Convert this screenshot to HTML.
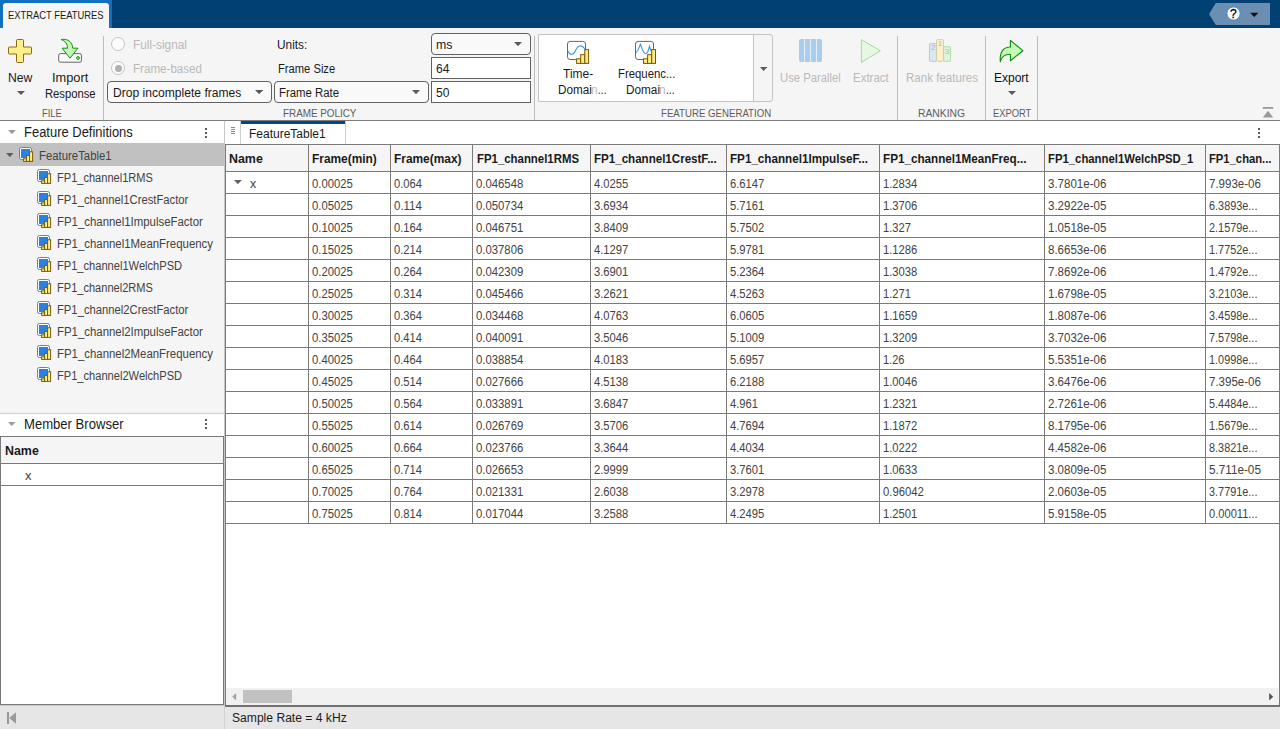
<!DOCTYPE html>
<html lang="en"><head><meta charset="utf-8"><title>Extract Features</title>
<style>
html,body{margin:0;padding:0;}
body{width:1280px;height:729px;overflow:hidden;position:relative;background:#fff;font-family:"Liberation Sans", sans-serif;}
.a{position:absolute;box-sizing:border-box;}
.t{position:absolute;white-space:pre;line-height:20px;height:20px;transform-origin:0 50%;}
</style></head><body>
<div class="a" style="left:0px;top:0px;width:1280px;height:28px;background:#004073;"></div>
<div class="a" style="left:0px;top:0px;width:112px;height:28px;background:#1171C0;"></div>
<div class="a" style="left:3px;top:3px;width:106px;height:25px;background:#F5F5F5;border-radius:3px 3px 0 0;"></div>
<span class="t" style="left:8.0px;top:5.0px;font-size:11px;font-weight:400;color:#1a1a1a;transform:scaleX(0.8522);">EXTRACT FEATURES</span>
<svg class="a" style="left:1209px;top:3px" width="61" height="22" viewBox="0 0 61 22"><path d="M0 11L6.8 0H61V22H6.8Z" fill="#6A8FB2"/><circle cx="24.5" cy="10.5" r="6.6" fill="#fff" stroke="#2B8CF0" stroke-width="0.9"/><path d="M41 9.8H49.4L45.2 14Z" fill="#111"/></svg>
<span class="t" style="left:1230.1px;top:4.3px;font-size:13px;font-weight:400;color:#000;transform:scaleX(0.9261);-webkit-text-stroke:0.3px #000;">?</span>
<div class="a" style="left:0px;top:28px;width:1280px;height:92px;background:#F5F5F5;"></div>
<div class="a" style="left:0px;top:120px;width:1280px;height:1px;background:#7d7d7d;"></div>
<div class="a" style="left:103px;top:36px;width:1px;height:84px;background:#bcbcbc;"></div>
<div class="a" style="left:534px;top:36px;width:1px;height:84px;background:#bcbcbc;"></div>
<div class="a" style="left:897px;top:36px;width:1px;height:84px;background:#bcbcbc;"></div>
<div class="a" style="left:985px;top:36px;width:1px;height:84px;background:#bcbcbc;"></div>
<div class="a" style="left:1037px;top:36px;width:1px;height:84px;background:#bcbcbc;"></div>
<svg class="a" style="left:8px;top:39px" width="24" height="24" viewBox="0 0 24 24"><path d="M9.5 0.5H14.5Q15.5 0.5 15.5 1.5V8H22.5Q23.5 8 23.5 9V14Q23.5 15 22.5 15H15.5V22.5Q15.5 23.5 14.5 23.5H9.5Q8.5 23.5 8.5 22.5V15H1.5Q0.5 15 0.5 14V9Q0.5 8 1.5 8H8.5V1.5Q8.5 0.5 9.5 0.5Z" fill="#FFEF8C" stroke="#8A6A0A" stroke-width="1"/></svg>
<span class="t" style="left:8.1px;top:68.0px;font-size:12px;font-weight:400;color:#1a1a1a;transform:scaleX(1.0160);">New</span>
<svg class="a" style="left:17px;top:91.3px" width="8" height="4.0" viewBox="0 0 8 4.0"><path d="M0 0H8L4.0 4.0Z" fill="#5a5a5a"/></svg>
<svg class="a" style="left:57px;top:38px" width="27" height="27" viewBox="0 0 27 27"><rect x="1.7" y="15.6" width="22.7" height="8.6" rx="1.6" fill="#fbfbfb" stroke="#666" stroke-width="1"/><path d="M4 1.5C10 0.6 15.2 3 15.8 10.2H20.9L13 20.2L5.1 10.2H10.5C10.5 6 8.5 3 4 1.5Z" fill="#C6F9B8" stroke="#12900F" stroke-width="1" stroke-linejoin="round"/><circle cx="21" cy="20" r="1.4" fill="#A6EE96" stroke="#12900F" stroke-width="1"/></svg>
<span class="t" style="left:52.2px;top:68.0px;font-size:12px;font-weight:400;color:#1a1a1a;transform:scaleX(1.0672);">Import</span>
<span class="t" style="left:45.0px;top:84.0px;font-size:12px;font-weight:400;color:#1a1a1a;transform:scaleX(0.9362);">Response</span>
<span class="t" style="left:42.0px;top:103.0px;font-size:11px;font-weight:400;color:#5c5c5c;transform:scaleX(0.8522);">FILE</span>
<div class="a" style="left:111px;top:37px;width:14px;height:14px;background:#fbfbfb;border:1px solid #c6c6c6;border-radius:50%;"></div>
<div class="a" style="left:111px;top:61px;width:14px;height:14px;background:#fbfbfb;border:1px solid #c6c6c6;border-radius:50%;"></div>
<div class="a" style="left:114.5px;top:64.5px;width:7px;height:7px;background:#b0b0b0;border-radius:50%;"></div>
<span class="t" style="left:132.5px;top:35.0px;font-size:12px;font-weight:400;color:#b9b9b9;transform:scaleX(0.9874);">Full-signal</span>
<span class="t" style="left:132.5px;top:59.0px;font-size:12px;font-weight:400;color:#b9b9b9;transform:scaleX(0.9667);">Frame-based</span>
<div class="a" style="left:107px;top:81px;width:165px;height:22px;background:#f9f9f9;border:1px solid #616161;border-radius:4px;"></div>
<span class="t" style="left:112.5px;top:82.7px;font-size:12px;font-weight:400;color:#1a1a1a;transform:scaleX(1.0079);">Drop incomplete frames</span>
<svg class="a" style="left:254.7px;top:90px" width="8.300000000000011" height="4.200000000000003" viewBox="0 0 8.300000000000011 4.200000000000003"><path d="M0 0H8.300000000000011L4.150000000000006 4.200000000000003Z" fill="#5a5a5a"/></svg>
<div class="a" style="left:274px;top:81px;width:155px;height:22px;background:#f9f9f9;border:1px solid #616161;border-radius:4px;"></div>
<span class="t" style="left:279.3px;top:82.7px;font-size:12px;font-weight:400;color:#1a1a1a;transform:scaleX(0.9470);">Frame Rate</span>
<svg class="a" style="left:412px;top:90px" width="8" height="4.200000000000003" viewBox="0 0 8 4.200000000000003"><path d="M0 0H8L4.0 4.200000000000003Z" fill="#5a5a5a"/></svg>
<span class="t" style="left:277.4px;top:35.0px;font-size:12px;font-weight:400;color:#1a1a1a;transform:scaleX(0.9874);">Units:</span>
<span class="t" style="left:277.5px;top:59.0px;font-size:12px;font-weight:400;color:#1a1a1a;transform:scaleX(0.9322);">Frame Size</span>
<div class="a" style="left:431px;top:33px;width:100px;height:22px;background:#f9f9f9;border:1px solid #616161;border-radius:4px;"></div>
<span class="t" style="left:436.1px;top:35.0px;font-size:12px;font-weight:400;color:#1a1a1a;transform:scaleX(1.0250);">ms</span>
<svg class="a" style="left:514.2px;top:42.2px" width="8.0" height="4.199999999999996" viewBox="0 0 8.0 4.199999999999996"><path d="M0 0H8.0L4.0 4.199999999999996Z" fill="#5a5a5a"/></svg>
<div class="a" style="left:431px;top:57px;width:100px;height:22px;background:#fff;border:1px solid #616161;"></div>
<span class="t" style="left:436.1px;top:59.0px;font-size:12px;font-weight:400;color:#1a1a1a;transform:scaleX(1.0030);">64</span>
<div class="a" style="left:431px;top:81px;width:100px;height:22px;background:#fff;border:1px solid #616161;"></div>
<span class="t" style="left:436.1px;top:82.7px;font-size:12px;font-weight:400;color:#1a1a1a;transform:scaleX(1.0030);">50</span>
<span class="t" style="left:282.8px;top:103.0px;font-size:11px;font-weight:400;color:#5c5c5c;transform:scaleX(0.8961);">FRAME POLICY</span>
<div class="a" style="left:538px;top:34px;width:235px;height:68px;background:#f5f5f5;border:1px solid #c4c4c4;border-radius:0 3px 3px 0;"></div>
<div class="a" style="left:539px;top:35px;width:214px;height:66px;background:#fff;"></div>
<div class="a" style="left:753px;top:35px;width:1px;height:66px;background:#c4c4c4;"></div>
<svg class="a" style="left:759.5px;top:67px" width="7.2000000000000455" height="4" viewBox="0 0 7.2000000000000455 4"><path d="M0 0H7.2000000000000455L3.6000000000000227 4Z" fill="#5a5a5a"/></svg>
<svg class="a" style="left:566px;top:40px" width="24" height="25" viewBox="0 0 24 25"><rect x="1.5" y="1.4" width="18" height="18.1" rx="2.6" fill="#fff" stroke="#666" stroke-width="1"/><path d="M1.8 11C4 16 7.5 15 9.5 10.5S15 3.5 19 9" fill="none" stroke="#3C96DC" stroke-width="1.1"/><g stroke="#7A5500" stroke-width="1" fill="#FFEE88"><rect x="10.6" y="18.8" width="4.1" height="4.6"/><rect x="14.7" y="14.7" width="4.1" height="8.7"/><rect x="18.799999999999997" y="9.6" width="3.8" height="13.8"/></g></svg>
<svg class="a" style="left:634px;top:40px" width="24" height="25" viewBox="0 0 24 25"><rect x="1.5" y="1.4" width="18" height="18.1" rx="2.6" fill="#fff" stroke="#666" stroke-width="1"/><path d="M1.8 12.7C4 11.5 5.5 6 6.5 4.3C7.5 7 9 13.5 11.5 13.7S14.5 9 15.5 6.3L17 11" fill="none" stroke="#3C96DC" stroke-width="1.1"/><g stroke="#7A5500" stroke-width="1" fill="#FFEE88"><rect x="9.5" y="18.8" width="4.1" height="4.6"/><rect x="13.6" y="14.7" width="4.1" height="8.7"/><rect x="17.7" y="9.6" width="3.8" height="13.8"/></g></svg>
<span class="t" style="left:563.0px;top:64.0px;font-size:12px;font-weight:400;color:#1a1a1a;transform:scaleX(0.9994);">Time-</span>
<span class="t" style="left:558.0px;top:79.5px;font-size:12px;font-weight:400;color:#1a1a1a;transform:scaleX(0.9744);">Domai</span>
<span class="t" style="left:591.3px;top:79.5px;font-size:12px;font-weight:400;color:#bdbdbd;transform:scaleX(1.0019);">n</span>
<span class="t" style="left:598.0px;top:79.5px;font-size:12px;font-weight:400;color:#1a1a1a;transform:scaleX(0.8487);">...</span>
<span class="t" style="left:617.5px;top:64.0px;font-size:12px;font-weight:400;color:#1a1a1a;transform:scaleX(0.9456);">Frequenc...</span>
<span class="t" style="left:625.8px;top:79.5px;font-size:12px;font-weight:400;color:#1a1a1a;transform:scaleX(0.9802);">Domai</span>
<span class="t" style="left:659.3px;top:79.5px;font-size:12px;font-weight:400;color:#bdbdbd;transform:scaleX(1.0019);">n</span>
<span class="t" style="left:666.3px;top:79.5px;font-size:12px;font-weight:400;color:#1a1a1a;transform:scaleX(0.8587);">...</span>
<span class="t" style="left:660.5px;top:103.0px;font-size:11px;font-weight:400;color:#5c5c5c;transform:scaleX(0.8781);">FEATURE GENERATION</span>
<svg class="a" style="left:799px;top:38.8px" width="23" height="23.2" viewBox="0 0 23 23.2"><path d="M2.5 0H5V23.2H2.5Q0 23.2 0 20.7V2.5Q0 0 2.5 0Z" fill="#AACDEE"/><rect x="6" y="0" width="5" height="23.2" fill="#AACDEE"/><rect x="12" y="0" width="5" height="23.2" fill="#AACDEE"/><path d="M18 0H20.5Q23 0 23 2.5V20.7Q23 23.2 20.5 23.2H18Z" fill="#AACDEE"/><path d="M5.5 0V23.2M11.5 0V23.2M17.5 0V23.2" stroke="#E3EEF8" stroke-width="1"/></svg>
<span class="t" style="left:780.3px;top:68.0px;font-size:12px;font-weight:400;color:#b9b9b9;transform:scaleX(0.9397);">Use Parallel</span>
<svg class="a" style="left:860px;top:38px" width="22" height="26" viewBox="0 0 22 26"><path d="M1.4 1.6L20.3 12.8L1.4 24.4Z" fill="#E6F7E2" stroke="#A6D9A2" stroke-width="1" stroke-linejoin="round"/></svg>
<span class="t" style="left:853.1px;top:68.0px;font-size:12px;font-weight:400;color:#b9b9b9;transform:scaleX(0.9587);">Extract</span>
<svg class="a" style="left:928px;top:38px" width="24" height="25" viewBox="0 0 24 25"><rect x="1.6" y="5.6" width="6.8" height="17.7" rx="0.8" fill="#DDE8F5" stroke="#A9C6EC"/><rect x="15.6" y="8.7" width="6.8" height="14.6" rx="0.8" fill="#E0F5DC" stroke="#A9DBA3"/><rect x="8.6" y="1.7" width="6.8" height="21.6" rx="0.8" fill="#FBF2CC" stroke="#D9C9A0"/><text x="3" y="12" font-size="8" font-family="Liberation Sans, sans-serif" fill="#b4b4b4">2</text><text x="9.8" y="7.9" font-size="8" font-family="Liberation Sans, sans-serif" fill="#b4b4b4">1</text><text x="16.8" y="15.6" font-size="8" font-family="Liberation Sans, sans-serif" fill="#b4b4b4">3</text></svg>
<span class="t" style="left:905.7px;top:68.0px;font-size:12px;font-weight:400;color:#b9b9b9;transform:scaleX(0.9636);">Rank features</span>
<span class="t" style="left:918.0px;top:103.0px;font-size:11px;font-weight:400;color:#5c5c5c;transform:scaleX(0.9377);">RANKING</span>
<svg class="a" style="left:999px;top:39px" width="25" height="25" viewBox="0 0 25 25"><path d="M11.4 1.4L23.9 11.7L11.4 21.7V15.2C6 15 2.5 17.5 1.3 22.8C0.5 12 5 8 11.4 8Z" fill="#C4FAB6" stroke="#0E8C0E" stroke-width="1.1" stroke-linejoin="round"/></svg>
<span class="t" style="left:994.3px;top:68.0px;font-size:12px;font-weight:400;color:#111;transform:scaleX(1.0004);">Export</span>
<svg class="a" style="left:1008px;top:91.4px" width="8" height="4.0" viewBox="0 0 8 4.0"><path d="M0 0H8L4.0 4.0Z" fill="#5a5a5a"/></svg>
<span class="t" style="left:992.9px;top:103.0px;font-size:11px;font-weight:400;color:#5c5c5c;transform:scaleX(0.8483);">EXPORT</span>
<svg class="a" style="left:1262px;top:107px" width="12" height="11" viewBox="0 0 12 11"><rect x="0.8" y="0" width="10.4" height="1.8" fill="#9a9a9a"/><path d="M0.8 10.4H11.2L6 3.8Z" fill="#9a9a9a"/></svg>
<div class="a" style="left:0px;top:121px;width:224px;height:22px;background:#fff;"></div>
<svg class="a" style="left:8.2px;top:130px" width="7.800000000000001" height="4.199999999999989" viewBox="0 0 7.800000000000001 4.199999999999989"><path d="M0 0H7.800000000000001L3.9000000000000004 4.199999999999989Z" fill="#9a9a9a"/></svg>
<span class="t" style="left:24.1px;top:121.6px;font-size:14px;font-weight:400;color:#1a1a1a;transform:scaleX(0.9258);">Feature Definitions</span>
<svg class="a" style="left:205px;top:127.6px" width="2" height="10" viewBox="0 0 2 10"><rect x="0" y="0" width="2" height="2" fill="#5a5a5a"/><rect x="0" y="4" width="2" height="2" fill="#5a5a5a"/><rect x="0" y="8" width="2" height="2" fill="#5a5a5a"/></svg>
<div class="a" style="left:0px;top:143px;width:224px;height:270px;background:#F5F5F5;"></div>
<div class="a" style="left:0px;top:143px;width:224px;height:23px;background:#C1C1C1;"></div>
<div class="a" style="left:0px;top:413px;width:224px;height:1px;background:#cfcfcf;"></div>
<div class="a" style="left:224px;top:121px;width:1px;height:585px;background:#c6c6c6;"></div>
<svg class="a" style="left:5.6px;top:153px" width="7.6" height="4.199999999999989" viewBox="0 0 7.6 4.199999999999989"><path d="M0 0H7.6L3.8 4.199999999999989Z" fill="#5f5f5f"/></svg>
<svg class="a" style="left:19px;top:147px" width="15" height="16" viewBox="0 0 15 16"><rect x="0.5" y="0.5" width="12" height="12" rx="1.8" fill="#fff" stroke="#3B8DE8" stroke-width="1"/><rect x="2" y="2" width="9" height="9" fill="#2A82DC"/><g stroke="#7A5A06" stroke-width="1" fill="#FFF08C"><rect x="4.6" y="11.8" width="3" height="2.6"/><rect x="7.6" y="8.6" width="3" height="5.8"/><rect x="10.6" y="4.8" width="3" height="9.6"/></g></svg>
<span class="t" style="left:39.0px;top:146.0px;font-size:12px;font-weight:400;color:#424242;transform:scaleX(0.9463);">FeatureTable1</span>
<svg class="a" style="left:37px;top:169px" width="15" height="16" viewBox="0 0 15 16"><rect x="0.5" y="0.5" width="12" height="12" rx="1.8" fill="#fff" stroke="#3B8DE8" stroke-width="1"/><rect x="2" y="2" width="9" height="9" fill="#2A82DC"/><g stroke="#7A5A06" stroke-width="1" fill="#FFF08C"><rect x="4.6" y="11.8" width="3" height="2.6"/><rect x="7.6" y="8.6" width="3" height="5.8"/><rect x="10.6" y="4.8" width="3" height="9.6"/></g></svg>
<span class="t" style="left:57.3px;top:167.8px;font-size:12px;font-weight:400;color:#424242;transform:scaleX(0.9216);">FP1_channel1RMS</span>
<svg class="a" style="left:37px;top:191px" width="15" height="16" viewBox="0 0 15 16"><rect x="0.5" y="0.5" width="12" height="12" rx="1.8" fill="#fff" stroke="#3B8DE8" stroke-width="1"/><rect x="2" y="2" width="9" height="9" fill="#2A82DC"/><g stroke="#7A5A06" stroke-width="1" fill="#FFF08C"><rect x="4.6" y="11.8" width="3" height="2.6"/><rect x="7.6" y="8.6" width="3" height="5.8"/><rect x="10.6" y="4.8" width="3" height="9.6"/></g></svg>
<span class="t" style="left:57.3px;top:189.8px;font-size:12px;font-weight:400;color:#424242;transform:scaleX(0.9373);">FP1_channel1CrestFactor</span>
<svg class="a" style="left:37px;top:213px" width="15" height="16" viewBox="0 0 15 16"><rect x="0.5" y="0.5" width="12" height="12" rx="1.8" fill="#fff" stroke="#3B8DE8" stroke-width="1"/><rect x="2" y="2" width="9" height="9" fill="#2A82DC"/><g stroke="#7A5A06" stroke-width="1" fill="#FFF08C"><rect x="4.6" y="11.8" width="3" height="2.6"/><rect x="7.6" y="8.6" width="3" height="5.8"/><rect x="10.6" y="4.8" width="3" height="9.6"/></g></svg>
<span class="t" style="left:57.3px;top:211.8px;font-size:12px;font-weight:400;color:#424242;transform:scaleX(0.9510);">FP1_channel1ImpulseFactor</span>
<svg class="a" style="left:37px;top:235px" width="15" height="16" viewBox="0 0 15 16"><rect x="0.5" y="0.5" width="12" height="12" rx="1.8" fill="#fff" stroke="#3B8DE8" stroke-width="1"/><rect x="2" y="2" width="9" height="9" fill="#2A82DC"/><g stroke="#7A5A06" stroke-width="1" fill="#FFF08C"><rect x="4.6" y="11.8" width="3" height="2.6"/><rect x="7.6" y="8.6" width="3" height="5.8"/><rect x="10.6" y="4.8" width="3" height="9.6"/></g></svg>
<span class="t" style="left:57.3px;top:233.8px;font-size:12px;font-weight:400;color:#424242;transform:scaleX(0.9506);">FP1_channel1MeanFrequency</span>
<svg class="a" style="left:37px;top:257px" width="15" height="16" viewBox="0 0 15 16"><rect x="0.5" y="0.5" width="12" height="12" rx="1.8" fill="#fff" stroke="#3B8DE8" stroke-width="1"/><rect x="2" y="2" width="9" height="9" fill="#2A82DC"/><g stroke="#7A5A06" stroke-width="1" fill="#FFF08C"><rect x="4.6" y="11.8" width="3" height="2.6"/><rect x="7.6" y="8.6" width="3" height="5.8"/><rect x="10.6" y="4.8" width="3" height="9.6"/></g></svg>
<span class="t" style="left:57.3px;top:255.8px;font-size:12px;font-weight:400;color:#424242;transform:scaleX(0.9254);">FP1_channel1WelchPSD</span>
<svg class="a" style="left:37px;top:279px" width="15" height="16" viewBox="0 0 15 16"><rect x="0.5" y="0.5" width="12" height="12" rx="1.8" fill="#fff" stroke="#3B8DE8" stroke-width="1"/><rect x="2" y="2" width="9" height="9" fill="#2A82DC"/><g stroke="#7A5A06" stroke-width="1" fill="#FFF08C"><rect x="4.6" y="11.8" width="3" height="2.6"/><rect x="7.6" y="8.6" width="3" height="5.8"/><rect x="10.6" y="4.8" width="3" height="9.6"/></g></svg>
<span class="t" style="left:57.3px;top:277.8px;font-size:12px;font-weight:400;color:#424242;transform:scaleX(0.9216);">FP1_channel2RMS</span>
<svg class="a" style="left:37px;top:301px" width="15" height="16" viewBox="0 0 15 16"><rect x="0.5" y="0.5" width="12" height="12" rx="1.8" fill="#fff" stroke="#3B8DE8" stroke-width="1"/><rect x="2" y="2" width="9" height="9" fill="#2A82DC"/><g stroke="#7A5A06" stroke-width="1" fill="#FFF08C"><rect x="4.6" y="11.8" width="3" height="2.6"/><rect x="7.6" y="8.6" width="3" height="5.8"/><rect x="10.6" y="4.8" width="3" height="9.6"/></g></svg>
<span class="t" style="left:57.3px;top:299.8px;font-size:12px;font-weight:400;color:#424242;transform:scaleX(0.9373);">FP1_channel2CrestFactor</span>
<svg class="a" style="left:37px;top:323px" width="15" height="16" viewBox="0 0 15 16"><rect x="0.5" y="0.5" width="12" height="12" rx="1.8" fill="#fff" stroke="#3B8DE8" stroke-width="1"/><rect x="2" y="2" width="9" height="9" fill="#2A82DC"/><g stroke="#7A5A06" stroke-width="1" fill="#FFF08C"><rect x="4.6" y="11.8" width="3" height="2.6"/><rect x="7.6" y="8.6" width="3" height="5.8"/><rect x="10.6" y="4.8" width="3" height="9.6"/></g></svg>
<span class="t" style="left:57.3px;top:321.8px;font-size:12px;font-weight:400;color:#424242;transform:scaleX(0.9510);">FP1_channel2ImpulseFactor</span>
<svg class="a" style="left:37px;top:345px" width="15" height="16" viewBox="0 0 15 16"><rect x="0.5" y="0.5" width="12" height="12" rx="1.8" fill="#fff" stroke="#3B8DE8" stroke-width="1"/><rect x="2" y="2" width="9" height="9" fill="#2A82DC"/><g stroke="#7A5A06" stroke-width="1" fill="#FFF08C"><rect x="4.6" y="11.8" width="3" height="2.6"/><rect x="7.6" y="8.6" width="3" height="5.8"/><rect x="10.6" y="4.8" width="3" height="9.6"/></g></svg>
<span class="t" style="left:57.3px;top:343.8px;font-size:12px;font-weight:400;color:#424242;transform:scaleX(0.9506);">FP1_channel2MeanFrequency</span>
<svg class="a" style="left:37px;top:367px" width="15" height="16" viewBox="0 0 15 16"><rect x="0.5" y="0.5" width="12" height="12" rx="1.8" fill="#fff" stroke="#3B8DE8" stroke-width="1"/><rect x="2" y="2" width="9" height="9" fill="#2A82DC"/><g stroke="#7A5A06" stroke-width="1" fill="#FFF08C"><rect x="4.6" y="11.8" width="3" height="2.6"/><rect x="7.6" y="8.6" width="3" height="5.8"/><rect x="10.6" y="4.8" width="3" height="9.6"/></g></svg>
<span class="t" style="left:57.3px;top:365.8px;font-size:12px;font-weight:400;color:#424242;transform:scaleX(0.9254);">FP1_channel2WelchPSD</span>
<div class="a" style="left:0px;top:414px;width:224px;height:22px;background:#fff;"></div>
<svg class="a" style="left:8.3px;top:422.2px" width="7.399999999999999" height="4.0" viewBox="0 0 7.399999999999999 4.0"><path d="M0 0H7.399999999999999L3.6999999999999993 4.0Z" fill="#9a9a9a"/></svg>
<span class="t" style="left:23.9px;top:414.0px;font-size:14px;font-weight:400;color:#1a1a1a;transform:scaleX(0.9344);">Member Browser</span>
<svg class="a" style="left:205px;top:419.4px" width="2" height="10" viewBox="0 0 2 10"><rect x="0" y="0" width="2" height="2" fill="#5a5a5a"/><rect x="0" y="4" width="2" height="2" fill="#5a5a5a"/><rect x="0" y="8" width="2" height="2" fill="#5a5a5a"/></svg>
<div class="a" style="left:0px;top:436px;width:224px;height:269px;background:#fff;border:1px solid #7a7a7a;"></div>
<div class="a" style="left:1px;top:437px;width:222px;height:26px;background:#F5F5F5;"></div>
<div class="a" style="left:0px;top:463px;width:224px;height:1px;background:#7a7a7a;"></div>
<div class="a" style="left:0px;top:485px;width:224px;height:1px;background:#7a7a7a;"></div>
<span class="t" style="left:4.5px;top:440.7px;font-size:12px;font-weight:700;color:#1a1a1a;transform:scaleX(1.0340);">Name</span>
<span class="t" style="left:24.5px;top:466.2px;font-size:12px;font-weight:400;color:#424242;transform:scaleX(1.0833);">x</span>
<div class="a" style="left:0px;top:705px;width:1280px;height:1px;background:#c9c9c9;"></div>
<div class="a" style="left:0px;top:706px;width:1280px;height:23px;background:#E6E6E6;"></div>
<div class="a" style="left:224px;top:706px;width:1px;height:23px;background:#d2d2d2;"></div>
<svg class="a" style="left:7px;top:712px" width="10" height="12" viewBox="0 0 10 12"><rect x="0" y="0" width="2" height="12" fill="#999"/><path d="M9 0.3V11.7L2.2 6Z" fill="#999"/></svg>
<span class="t" style="left:231.8px;top:707.5px;font-size:12px;font-weight:400;color:#1a1a1a;transform:scaleX(1.0086);">Sample Rate = 4 kHz</span>
<div class="a" style="left:225px;top:121px;width:1055px;height:23px;background:#fff;"></div>
<div class="a" style="left:231px;top:127px;width:4px;height:1px;background:#8a8a8a;"></div>
<div class="a" style="left:231px;top:129px;width:4px;height:1px;background:#8a8a8a;"></div>
<div class="a" style="left:231px;top:131px;width:4px;height:1px;background:#8a8a8a;"></div>
<div class="a" style="left:231px;top:133px;width:4px;height:1px;background:#8a8a8a;"></div>
<div class="a" style="left:241px;top:121px;width:104px;height:3px;background:#00498A;"></div>
<div class="a" style="left:345px;top:121px;width:1px;height:23px;background:#cdcdcd;"></div>
<div class="a" style="left:240px;top:121px;width:1px;height:23px;background:#cdcdcd;"></div>
<span class="t" style="left:248.7px;top:124.0px;font-size:12px;font-weight:400;color:#1a1a1a;transform:scaleX(0.9998);">FeatureTable1</span>
<svg class="a" style="left:1258px;top:127.5px" width="2" height="10" viewBox="0 0 2 10"><rect x="0" y="0" width="2" height="2" fill="#5a5a5a"/><rect x="0" y="4" width="2" height="2" fill="#5a5a5a"/><rect x="0" y="8" width="2" height="2" fill="#5a5a5a"/></svg>
<div class="a" style="left:225px;top:144px;width:1055px;height:562px;background:#fff;border:1px solid #7a7a7a;border-left-width:1.5px;"></div>
<div class="a" style="left:226px;top:145px;width:1053px;height:26px;background:#F5F5F5;"></div>
<div class="a" style="left:226px;top:171px;width:1054px;height:1px;background:#7a7a7a;"></div>
<div class="a" style="left:226px;top:193px;width:1054px;height:1px;background:#7a7a7a;"></div>
<div class="a" style="left:226px;top:215px;width:1054px;height:1px;background:#7a7a7a;"></div>
<div class="a" style="left:226px;top:237px;width:1054px;height:1px;background:#7a7a7a;"></div>
<div class="a" style="left:226px;top:259px;width:1054px;height:1px;background:#7a7a7a;"></div>
<div class="a" style="left:226px;top:281px;width:1054px;height:1px;background:#7a7a7a;"></div>
<div class="a" style="left:226px;top:303px;width:1054px;height:1px;background:#7a7a7a;"></div>
<div class="a" style="left:226px;top:325px;width:1054px;height:1px;background:#7a7a7a;"></div>
<div class="a" style="left:226px;top:347px;width:1054px;height:1px;background:#7a7a7a;"></div>
<div class="a" style="left:226px;top:369px;width:1054px;height:1px;background:#7a7a7a;"></div>
<div class="a" style="left:226px;top:391px;width:1054px;height:1px;background:#7a7a7a;"></div>
<div class="a" style="left:226px;top:413px;width:1054px;height:1px;background:#7a7a7a;"></div>
<div class="a" style="left:226px;top:435px;width:1054px;height:1px;background:#7a7a7a;"></div>
<div class="a" style="left:226px;top:457px;width:1054px;height:1px;background:#7a7a7a;"></div>
<div class="a" style="left:226px;top:479px;width:1054px;height:1px;background:#7a7a7a;"></div>
<div class="a" style="left:226px;top:501px;width:1054px;height:1px;background:#7a7a7a;"></div>
<div class="a" style="left:226px;top:523px;width:1054px;height:1px;background:#7a7a7a;"></div>
<div class="a" style="left:308px;top:145px;width:1px;height:379px;background:#7a7a7a;"></div>
<div class="a" style="left:390px;top:145px;width:1px;height:379px;background:#7a7a7a;"></div>
<div class="a" style="left:472px;top:145px;width:1px;height:379px;background:#7a7a7a;"></div>
<div class="a" style="left:590px;top:145px;width:1px;height:379px;background:#7a7a7a;"></div>
<div class="a" style="left:726px;top:145px;width:1px;height:379px;background:#7a7a7a;"></div>
<div class="a" style="left:879px;top:145px;width:1px;height:379px;background:#7a7a7a;"></div>
<div class="a" style="left:1044px;top:145px;width:1px;height:379px;background:#7a7a7a;"></div>
<div class="a" style="left:1205px;top:145px;width:1px;height:379px;background:#7a7a7a;"></div>
<span class="t" style="left:229.0px;top:148.5px;font-size:12px;font-weight:700;color:#1a1a1a;transform:scaleX(1.0340);">Name</span>
<span class="t" style="left:312.0px;top:148.5px;font-size:12px;font-weight:700;color:#1a1a1a;transform:scaleX(0.9917);">Frame(min)</span>
<span class="t" style="left:394.0px;top:148.5px;font-size:12px;font-weight:700;color:#1a1a1a;transform:scaleX(0.9922);">Frame(max)</span>
<span class="t" style="left:476.5px;top:148.5px;font-size:12px;font-weight:700;color:#1a1a1a;transform:scaleX(0.9499);">FP1_channel1RMS</span>
<span class="t" style="left:594.0px;top:148.5px;font-size:12px;font-weight:700;color:#1a1a1a;transform:scaleX(0.9640);">FP1_channel1CrestF...</span>
<span class="t" style="left:730.0px;top:148.5px;font-size:12px;font-weight:700;color:#1a1a1a;transform:scaleX(0.9714);">FP1_channel1ImpulseF...</span>
<span class="t" style="left:883.0px;top:148.5px;font-size:12px;font-weight:700;color:#1a1a1a;transform:scaleX(0.9736);">FP1_channel1MeanFreq...</span>
<span class="t" style="left:1048.2px;top:148.5px;font-size:12px;font-weight:700;color:#1a1a1a;transform:scaleX(0.9445);">FP1_channel1WelchPSD_1</span>
<span class="t" style="left:1209.0px;top:148.5px;font-size:12px;font-weight:700;color:#1a1a1a;transform:scaleX(0.9370);">FP1_chan...</span>
<svg class="a" style="left:234.2px;top:180.2px" width="7.800000000000011" height="4.200000000000017" viewBox="0 0 7.800000000000011 4.200000000000017"><path d="M0 0H7.800000000000011L3.9000000000000057 4.200000000000017Z" fill="#5f5f5f"/></svg>
<span class="t" style="left:249.5px;top:173.8px;font-size:12px;font-weight:400;color:#424242;transform:scaleX(1.0333);">x</span>
<span class="t" style="left:312.0px;top:173.8px;font-size:12px;font-weight:400;color:#424242;transform:scaleX(0.9408);">0.00025</span>
<span class="t" style="left:394.0px;top:173.8px;font-size:12px;font-weight:400;color:#424242;transform:scaleX(0.9284);">0.064</span>
<span class="t" style="left:476.0px;top:173.8px;font-size:12px;font-weight:400;color:#424242;transform:scaleX(0.9446);">0.046548</span>
<span class="t" style="left:594.0px;top:173.8px;font-size:12px;font-weight:400;color:#424242;transform:scaleX(0.9359);">4.0255</span>
<span class="t" style="left:730.0px;top:173.8px;font-size:12px;font-weight:400;color:#424242;transform:scaleX(0.9359);">6.6147</span>
<span class="t" style="left:883.0px;top:173.8px;font-size:12px;font-weight:400;color:#424242;transform:scaleX(0.9359);">1.2834</span>
<span class="t" style="left:1048.0px;top:173.8px;font-size:12px;font-weight:400;color:#424242;transform:scaleX(0.9611);">3.7801e-06</span>
<span class="t" style="left:1209.0px;top:173.8px;font-size:12px;font-weight:400;color:#424242;transform:scaleX(0.9603);">7.993e-06</span>
<span class="t" style="left:312.0px;top:195.8px;font-size:12px;font-weight:400;color:#424242;transform:scaleX(0.9408);">0.05025</span>
<span class="t" style="left:394.0px;top:195.8px;font-size:12px;font-weight:400;color:#424242;transform:scaleX(0.9567);">0.114</span>
<span class="t" style="left:476.0px;top:195.8px;font-size:12px;font-weight:400;color:#424242;transform:scaleX(0.9446);">0.050734</span>
<span class="t" style="left:594.0px;top:195.8px;font-size:12px;font-weight:400;color:#424242;transform:scaleX(0.9359);">3.6934</span>
<span class="t" style="left:730.0px;top:195.8px;font-size:12px;font-weight:400;color:#424242;transform:scaleX(0.9359);">5.7161</span>
<span class="t" style="left:883.0px;top:195.8px;font-size:12px;font-weight:400;color:#424242;transform:scaleX(0.9359);">1.3706</span>
<span class="t" style="left:1048.0px;top:195.8px;font-size:12px;font-weight:400;color:#424242;transform:scaleX(0.9611);">3.2922e-05</span>
<span class="t" style="left:1209.0px;top:195.8px;font-size:12px;font-weight:400;color:#424242;transform:scaleX(0.9071);">6.3893e...</span>
<span class="t" style="left:312.0px;top:217.8px;font-size:12px;font-weight:400;color:#424242;transform:scaleX(0.9408);">0.10025</span>
<span class="t" style="left:394.0px;top:217.8px;font-size:12px;font-weight:400;color:#424242;transform:scaleX(0.9284);">0.164</span>
<span class="t" style="left:476.0px;top:217.8px;font-size:12px;font-weight:400;color:#424242;transform:scaleX(0.9446);">0.046751</span>
<span class="t" style="left:594.0px;top:217.8px;font-size:12px;font-weight:400;color:#424242;transform:scaleX(0.9359);">3.8409</span>
<span class="t" style="left:730.0px;top:217.8px;font-size:12px;font-weight:400;color:#424242;transform:scaleX(0.9359);">5.7502</span>
<span class="t" style="left:883.0px;top:217.8px;font-size:12px;font-weight:400;color:#424242;transform:scaleX(0.9284);">1.327</span>
<span class="t" style="left:1048.0px;top:217.8px;font-size:12px;font-weight:400;color:#424242;transform:scaleX(0.9611);">1.0518e-05</span>
<span class="t" style="left:1209.0px;top:217.8px;font-size:12px;font-weight:400;color:#424242;transform:scaleX(0.9071);">2.1579e...</span>
<span class="t" style="left:312.0px;top:239.8px;font-size:12px;font-weight:400;color:#424242;transform:scaleX(0.9408);">0.15025</span>
<span class="t" style="left:394.0px;top:239.8px;font-size:12px;font-weight:400;color:#424242;transform:scaleX(0.9284);">0.214</span>
<span class="t" style="left:476.0px;top:239.8px;font-size:12px;font-weight:400;color:#424242;transform:scaleX(0.9446);">0.037806</span>
<span class="t" style="left:594.0px;top:239.8px;font-size:12px;font-weight:400;color:#424242;transform:scaleX(0.9359);">4.1297</span>
<span class="t" style="left:730.0px;top:239.8px;font-size:12px;font-weight:400;color:#424242;transform:scaleX(0.9359);">5.9781</span>
<span class="t" style="left:883.0px;top:239.8px;font-size:12px;font-weight:400;color:#424242;transform:scaleX(0.9359);">1.1286</span>
<span class="t" style="left:1048.0px;top:239.8px;font-size:12px;font-weight:400;color:#424242;transform:scaleX(0.9611);">8.6653e-06</span>
<span class="t" style="left:1209.0px;top:239.8px;font-size:12px;font-weight:400;color:#424242;transform:scaleX(0.9071);">1.7752e...</span>
<span class="t" style="left:312.0px;top:261.8px;font-size:12px;font-weight:400;color:#424242;transform:scaleX(0.9408);">0.20025</span>
<span class="t" style="left:394.0px;top:261.8px;font-size:12px;font-weight:400;color:#424242;transform:scaleX(0.9284);">0.264</span>
<span class="t" style="left:476.0px;top:261.8px;font-size:12px;font-weight:400;color:#424242;transform:scaleX(0.9446);">0.042309</span>
<span class="t" style="left:594.0px;top:261.8px;font-size:12px;font-weight:400;color:#424242;transform:scaleX(0.9359);">3.6901</span>
<span class="t" style="left:730.0px;top:261.8px;font-size:12px;font-weight:400;color:#424242;transform:scaleX(0.9359);">5.2364</span>
<span class="t" style="left:883.0px;top:261.8px;font-size:12px;font-weight:400;color:#424242;transform:scaleX(0.9359);">1.3038</span>
<span class="t" style="left:1048.0px;top:261.8px;font-size:12px;font-weight:400;color:#424242;transform:scaleX(0.9611);">7.8692e-06</span>
<span class="t" style="left:1209.0px;top:261.8px;font-size:12px;font-weight:400;color:#424242;transform:scaleX(0.9071);">1.4792e...</span>
<span class="t" style="left:312.0px;top:283.8px;font-size:12px;font-weight:400;color:#424242;transform:scaleX(0.9408);">0.25025</span>
<span class="t" style="left:394.0px;top:283.8px;font-size:12px;font-weight:400;color:#424242;transform:scaleX(0.9284);">0.314</span>
<span class="t" style="left:476.0px;top:283.8px;font-size:12px;font-weight:400;color:#424242;transform:scaleX(0.9446);">0.045466</span>
<span class="t" style="left:594.0px;top:283.8px;font-size:12px;font-weight:400;color:#424242;transform:scaleX(0.9359);">3.2621</span>
<span class="t" style="left:730.0px;top:283.8px;font-size:12px;font-weight:400;color:#424242;transform:scaleX(0.9359);">4.5263</span>
<span class="t" style="left:883.0px;top:283.8px;font-size:12px;font-weight:400;color:#424242;transform:scaleX(0.9284);">1.271</span>
<span class="t" style="left:1048.0px;top:283.8px;font-size:12px;font-weight:400;color:#424242;transform:scaleX(0.9611);">1.6798e-05</span>
<span class="t" style="left:1209.0px;top:283.8px;font-size:12px;font-weight:400;color:#424242;transform:scaleX(0.9071);">3.2103e...</span>
<span class="t" style="left:312.0px;top:305.8px;font-size:12px;font-weight:400;color:#424242;transform:scaleX(0.9408);">0.30025</span>
<span class="t" style="left:394.0px;top:305.8px;font-size:12px;font-weight:400;color:#424242;transform:scaleX(0.9284);">0.364</span>
<span class="t" style="left:476.0px;top:305.8px;font-size:12px;font-weight:400;color:#424242;transform:scaleX(0.9446);">0.034468</span>
<span class="t" style="left:594.0px;top:305.8px;font-size:12px;font-weight:400;color:#424242;transform:scaleX(0.9359);">4.0763</span>
<span class="t" style="left:730.0px;top:305.8px;font-size:12px;font-weight:400;color:#424242;transform:scaleX(0.9359);">6.0605</span>
<span class="t" style="left:883.0px;top:305.8px;font-size:12px;font-weight:400;color:#424242;transform:scaleX(0.9359);">1.1659</span>
<span class="t" style="left:1048.0px;top:305.8px;font-size:12px;font-weight:400;color:#424242;transform:scaleX(0.9611);">1.8087e-06</span>
<span class="t" style="left:1209.0px;top:305.8px;font-size:12px;font-weight:400;color:#424242;transform:scaleX(0.9071);">3.4598e...</span>
<span class="t" style="left:312.0px;top:327.8px;font-size:12px;font-weight:400;color:#424242;transform:scaleX(0.9408);">0.35025</span>
<span class="t" style="left:394.0px;top:327.8px;font-size:12px;font-weight:400;color:#424242;transform:scaleX(0.9284);">0.414</span>
<span class="t" style="left:476.0px;top:327.8px;font-size:12px;font-weight:400;color:#424242;transform:scaleX(0.9446);">0.040091</span>
<span class="t" style="left:594.0px;top:327.8px;font-size:12px;font-weight:400;color:#424242;transform:scaleX(0.9359);">3.5046</span>
<span class="t" style="left:730.0px;top:327.8px;font-size:12px;font-weight:400;color:#424242;transform:scaleX(0.9359);">5.1009</span>
<span class="t" style="left:883.0px;top:327.8px;font-size:12px;font-weight:400;color:#424242;transform:scaleX(0.9359);">1.3209</span>
<span class="t" style="left:1048.0px;top:327.8px;font-size:12px;font-weight:400;color:#424242;transform:scaleX(0.9611);">3.7032e-06</span>
<span class="t" style="left:1209.0px;top:327.8px;font-size:12px;font-weight:400;color:#424242;transform:scaleX(0.9071);">7.5798e...</span>
<span class="t" style="left:312.0px;top:349.8px;font-size:12px;font-weight:400;color:#424242;transform:scaleX(0.9408);">0.40025</span>
<span class="t" style="left:394.0px;top:349.8px;font-size:12px;font-weight:400;color:#424242;transform:scaleX(0.9284);">0.464</span>
<span class="t" style="left:476.0px;top:349.8px;font-size:12px;font-weight:400;color:#424242;transform:scaleX(0.9446);">0.038854</span>
<span class="t" style="left:594.0px;top:349.8px;font-size:12px;font-weight:400;color:#424242;transform:scaleX(0.9359);">4.0183</span>
<span class="t" style="left:730.0px;top:349.8px;font-size:12px;font-weight:400;color:#424242;transform:scaleX(0.9359);">5.6957</span>
<span class="t" style="left:883.0px;top:349.8px;font-size:12px;font-weight:400;color:#424242;transform:scaleX(0.9165);">1.26</span>
<span class="t" style="left:1048.0px;top:349.8px;font-size:12px;font-weight:400;color:#424242;transform:scaleX(0.9611);">5.5351e-06</span>
<span class="t" style="left:1209.0px;top:349.8px;font-size:12px;font-weight:400;color:#424242;transform:scaleX(0.9071);">1.0998e...</span>
<span class="t" style="left:312.0px;top:371.8px;font-size:12px;font-weight:400;color:#424242;transform:scaleX(0.9408);">0.45025</span>
<span class="t" style="left:394.0px;top:371.8px;font-size:12px;font-weight:400;color:#424242;transform:scaleX(0.9284);">0.514</span>
<span class="t" style="left:476.0px;top:371.8px;font-size:12px;font-weight:400;color:#424242;transform:scaleX(0.9446);">0.027666</span>
<span class="t" style="left:594.0px;top:371.8px;font-size:12px;font-weight:400;color:#424242;transform:scaleX(0.9359);">4.5138</span>
<span class="t" style="left:730.0px;top:371.8px;font-size:12px;font-weight:400;color:#424242;transform:scaleX(0.9359);">6.2188</span>
<span class="t" style="left:883.0px;top:371.8px;font-size:12px;font-weight:400;color:#424242;transform:scaleX(0.9359);">1.0046</span>
<span class="t" style="left:1048.0px;top:371.8px;font-size:12px;font-weight:400;color:#424242;transform:scaleX(0.9611);">3.6476e-06</span>
<span class="t" style="left:1209.0px;top:371.8px;font-size:12px;font-weight:400;color:#424242;transform:scaleX(0.9603);">7.395e-06</span>
<span class="t" style="left:312.0px;top:393.8px;font-size:12px;font-weight:400;color:#424242;transform:scaleX(0.9408);">0.50025</span>
<span class="t" style="left:394.0px;top:393.8px;font-size:12px;font-weight:400;color:#424242;transform:scaleX(0.9284);">0.564</span>
<span class="t" style="left:476.0px;top:393.8px;font-size:12px;font-weight:400;color:#424242;transform:scaleX(0.9446);">0.033891</span>
<span class="t" style="left:594.0px;top:393.8px;font-size:12px;font-weight:400;color:#424242;transform:scaleX(0.9359);">3.6847</span>
<span class="t" style="left:730.0px;top:393.8px;font-size:12px;font-weight:400;color:#424242;transform:scaleX(0.9284);">4.961</span>
<span class="t" style="left:883.0px;top:393.8px;font-size:12px;font-weight:400;color:#424242;transform:scaleX(0.9359);">1.2321</span>
<span class="t" style="left:1048.0px;top:393.8px;font-size:12px;font-weight:400;color:#424242;transform:scaleX(0.9611);">2.7261e-06</span>
<span class="t" style="left:1209.0px;top:393.8px;font-size:12px;font-weight:400;color:#424242;transform:scaleX(0.9071);">5.4484e...</span>
<span class="t" style="left:312.0px;top:415.8px;font-size:12px;font-weight:400;color:#424242;transform:scaleX(0.9408);">0.55025</span>
<span class="t" style="left:394.0px;top:415.8px;font-size:12px;font-weight:400;color:#424242;transform:scaleX(0.9284);">0.614</span>
<span class="t" style="left:476.0px;top:415.8px;font-size:12px;font-weight:400;color:#424242;transform:scaleX(0.9446);">0.026769</span>
<span class="t" style="left:594.0px;top:415.8px;font-size:12px;font-weight:400;color:#424242;transform:scaleX(0.9359);">3.5706</span>
<span class="t" style="left:730.0px;top:415.8px;font-size:12px;font-weight:400;color:#424242;transform:scaleX(0.9359);">4.7694</span>
<span class="t" style="left:883.0px;top:415.8px;font-size:12px;font-weight:400;color:#424242;transform:scaleX(0.9359);">1.1872</span>
<span class="t" style="left:1048.0px;top:415.8px;font-size:12px;font-weight:400;color:#424242;transform:scaleX(0.9611);">8.1795e-06</span>
<span class="t" style="left:1209.0px;top:415.8px;font-size:12px;font-weight:400;color:#424242;transform:scaleX(0.9071);">1.5679e...</span>
<span class="t" style="left:312.0px;top:437.8px;font-size:12px;font-weight:400;color:#424242;transform:scaleX(0.9408);">0.60025</span>
<span class="t" style="left:394.0px;top:437.8px;font-size:12px;font-weight:400;color:#424242;transform:scaleX(0.9284);">0.664</span>
<span class="t" style="left:476.0px;top:437.8px;font-size:12px;font-weight:400;color:#424242;transform:scaleX(0.9446);">0.023766</span>
<span class="t" style="left:594.0px;top:437.8px;font-size:12px;font-weight:400;color:#424242;transform:scaleX(0.9359);">3.3644</span>
<span class="t" style="left:730.0px;top:437.8px;font-size:12px;font-weight:400;color:#424242;transform:scaleX(0.9359);">4.4034</span>
<span class="t" style="left:883.0px;top:437.8px;font-size:12px;font-weight:400;color:#424242;transform:scaleX(0.9359);">1.0222</span>
<span class="t" style="left:1048.0px;top:437.8px;font-size:12px;font-weight:400;color:#424242;transform:scaleX(0.9611);">4.4582e-06</span>
<span class="t" style="left:1209.0px;top:437.8px;font-size:12px;font-weight:400;color:#424242;transform:scaleX(0.9071);">8.3821e...</span>
<span class="t" style="left:312.0px;top:459.8px;font-size:12px;font-weight:400;color:#424242;transform:scaleX(0.9408);">0.65025</span>
<span class="t" style="left:394.0px;top:459.8px;font-size:12px;font-weight:400;color:#424242;transform:scaleX(0.9284);">0.714</span>
<span class="t" style="left:476.0px;top:459.8px;font-size:12px;font-weight:400;color:#424242;transform:scaleX(0.9446);">0.026653</span>
<span class="t" style="left:594.0px;top:459.8px;font-size:12px;font-weight:400;color:#424242;transform:scaleX(0.9359);">2.9999</span>
<span class="t" style="left:730.0px;top:459.8px;font-size:12px;font-weight:400;color:#424242;transform:scaleX(0.9359);">3.7601</span>
<span class="t" style="left:883.0px;top:459.8px;font-size:12px;font-weight:400;color:#424242;transform:scaleX(0.9359);">1.0633</span>
<span class="t" style="left:1048.0px;top:459.8px;font-size:12px;font-weight:400;color:#424242;transform:scaleX(0.9611);">3.0809e-05</span>
<span class="t" style="left:1209.0px;top:459.8px;font-size:12px;font-weight:400;color:#424242;transform:scaleX(0.9764);">5.711e-05</span>
<span class="t" style="left:312.0px;top:481.8px;font-size:12px;font-weight:400;color:#424242;transform:scaleX(0.9408);">0.70025</span>
<span class="t" style="left:394.0px;top:481.8px;font-size:12px;font-weight:400;color:#424242;transform:scaleX(0.9284);">0.764</span>
<span class="t" style="left:476.0px;top:481.8px;font-size:12px;font-weight:400;color:#424242;transform:scaleX(0.9446);">0.021331</span>
<span class="t" style="left:594.0px;top:481.8px;font-size:12px;font-weight:400;color:#424242;transform:scaleX(0.9359);">2.6038</span>
<span class="t" style="left:730.0px;top:481.8px;font-size:12px;font-weight:400;color:#424242;transform:scaleX(0.9359);">3.2978</span>
<span class="t" style="left:883.0px;top:481.8px;font-size:12px;font-weight:400;color:#424242;transform:scaleX(0.9408);">0.96042</span>
<span class="t" style="left:1048.0px;top:481.8px;font-size:12px;font-weight:400;color:#424242;transform:scaleX(0.9611);">2.0603e-05</span>
<span class="t" style="left:1209.0px;top:481.8px;font-size:12px;font-weight:400;color:#424242;transform:scaleX(0.9071);">3.7791e...</span>
<span class="t" style="left:312.0px;top:503.8px;font-size:12px;font-weight:400;color:#424242;transform:scaleX(0.9408);">0.75025</span>
<span class="t" style="left:394.0px;top:503.8px;font-size:12px;font-weight:400;color:#424242;transform:scaleX(0.9284);">0.814</span>
<span class="t" style="left:476.0px;top:503.8px;font-size:12px;font-weight:400;color:#424242;transform:scaleX(0.9446);">0.017044</span>
<span class="t" style="left:594.0px;top:503.8px;font-size:12px;font-weight:400;color:#424242;transform:scaleX(0.9359);">3.2588</span>
<span class="t" style="left:730.0px;top:503.8px;font-size:12px;font-weight:400;color:#424242;transform:scaleX(0.9359);">4.2495</span>
<span class="t" style="left:883.0px;top:503.8px;font-size:12px;font-weight:400;color:#424242;transform:scaleX(0.9359);">1.2501</span>
<span class="t" style="left:1048.0px;top:503.8px;font-size:12px;font-weight:400;color:#424242;transform:scaleX(0.9611);">5.9158e-05</span>
<span class="t" style="left:1209.0px;top:503.8px;font-size:12px;font-weight:400;color:#424242;transform:scaleX(0.9261);">0.00011...</span>
<div class="a" style="left:226px;top:688px;width:1053px;height:17px;background:#F1F1F1;"></div>
<div class="a" style="left:243px;top:690px;width:49px;height:13px;background:#C1C1C1;"></div>
<svg class="a" style="left:232px;top:693px" width="5" height="8" viewBox="0 0 5 8"><path d="M4.2 0V7.4L0.2 3.7Z" fill="#a3a3a3"/></svg>
<svg class="a" style="left:1269px;top:693px" width="5" height="8" viewBox="0 0 5 8"><path d="M0.2 0V7.4L4.2 3.7Z" fill="#505050"/></svg>
<div class="a" style="left:225px;top:705px;width:1055px;height:2px;background:#707070;"></div>
</body></html>
